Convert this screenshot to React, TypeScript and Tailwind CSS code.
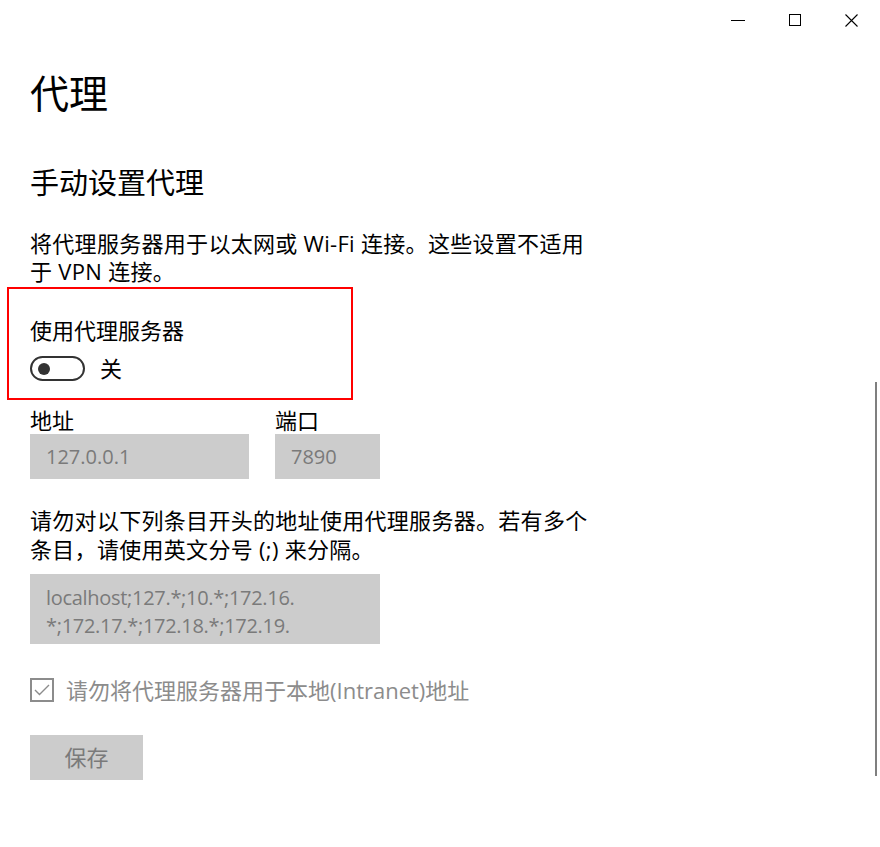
import React from 'react';

const FONT = "font-['Open_Sans','Noto_Sans_CJK_SC',sans-serif]";

export default function App() {
  return (
    <main className={`relative w-[880px] h-[847px] bg-white text-black overflow-hidden ${FONT}`}>
      {/* --- TITLE BAR --- */}
      <header className="h-[40px] flex justify-end">
        <WinBtn>
          <div className="w-[14px] h-[1px] bg-black" />
        </WinBtn>
        <WinBtn>
          <div className="w-[12px] h-[12px] border border-black" />
        </WinBtn>
        <WinBtn>
          <svg width="13" height="13" viewBox="0 0 13 13">
            <path d="M0.5 0.5 L12.5 12.5 M12.5 0.5 L0.5 12.5" stroke="#000" strokeWidth="1.1" />
          </svg>
        </WinBtn>
      </header>

      {/* --- CONTENT --- */}
      <section className="pl-[30px] flex flex-col items-start">
        <h1 className="mt-[27px] text-[39px] leading-[52px] font-normal">代理</h1>
        <h2 className="mt-[44px] text-[29px] leading-[40px] font-normal">手动设置代理</h2>

        <p className="mt-[26px] text-[22px] leading-[28px] tracking-[0.3px]">
          将代理服务器用于以太网或 Wi-Fi 连接。这些设置不适用
          <br />于 VPN 连接。
        </p>

        <p className="mt-[30px] text-[22px] leading-[30px]">使用代理服务器</p>
        <div className="mt-[11px] flex items-center gap-[15px]">
          <div className="w-[55px] h-[25px] rounded-full border-2 border-[#333] flex items-center pl-[6px]">
            <div className="w-[12px] h-[12px] rounded-full bg-[#333]" />
          </div>
          <span className="text-[22px] leading-[25px]">关</span>
        </div>

        {/* ADDRESS / PORT */}
        <div className="mt-[25px] flex gap-[26px]">
          <Field label="地址" value="127.0.0.1" width="w-[219px]" />
          <Field label="端口" value="7890" width="w-[105px]" />
        </div>

        <p className="mt-[27px] text-[22px] leading-[29px] tracking-[0.3px]">
          请勿对以下列条目开头的地址使用代理服务器。若有多个
          <br />条目，请使用英文分号 (;) 来分隔。
        </p>

        <div className="mt-[10px] w-[350px] h-[70px] bg-[#cccccc] pl-[16px] pt-[10px] text-[20px] leading-[28px] text-[#7a7a7a] tracking-[-0.3px]">
          localhost;127.*;10.*;172.16.
          <br />*;172.17.*;172.18.*;172.19.
        </div>

        {/* CHECKBOX */}
        <div className="mt-[32px] flex items-center gap-[12px]">
          <div className="w-[24px] h-[24px] border-2 border-[#8c8c8c] flex items-center justify-center">
            <svg width="16" height="12" viewBox="0 0 16 12">
              <path d="M1 6 L5.5 10.5 L15 1" fill="none" stroke="#8c8c8c" strokeWidth="1.4" />
            </svg>
          </div>
          <span className="text-[22px] leading-[28px] text-[#8c8c8c]">请勿将代理服务器用于本地(Intranet)地址</span>
        </div>

        <button className="mt-[31px] w-[113px] h-[45px] bg-[#cccccc] text-[22px] text-[#7a7a7a] flex items-center justify-center">
          保存
        </button>
      </section>

      {/* annotation box */}
      <div className="absolute left-[7px] top-[287px] w-[346px] h-[113px] border-2 border-[#ff0000]" />

      {/* scrollbar */}
      <div className="absolute left-[875px] top-[382px] w-[2px] h-[394px] bg-[#7f7f7f]" />
    </main>
  );
}

function WinBtn({ children }: { children: React.ReactNode }) {
  return <div className="w-[57px] h-[40px] flex items-center justify-center">{children}</div>;
}

function Field({ label, value, width }: { label: string; value: string; width: string }) {
  return (
    <div className="flex flex-col">
      <span className="text-[22px] leading-[28px]">{label}</span>
      <div className={`${width} h-[45px] bg-[#cccccc] pl-[16px] flex items-center text-[20px] text-[#7a7a7a]`}>
        {value}
      </div>
    </div>
  );
}
